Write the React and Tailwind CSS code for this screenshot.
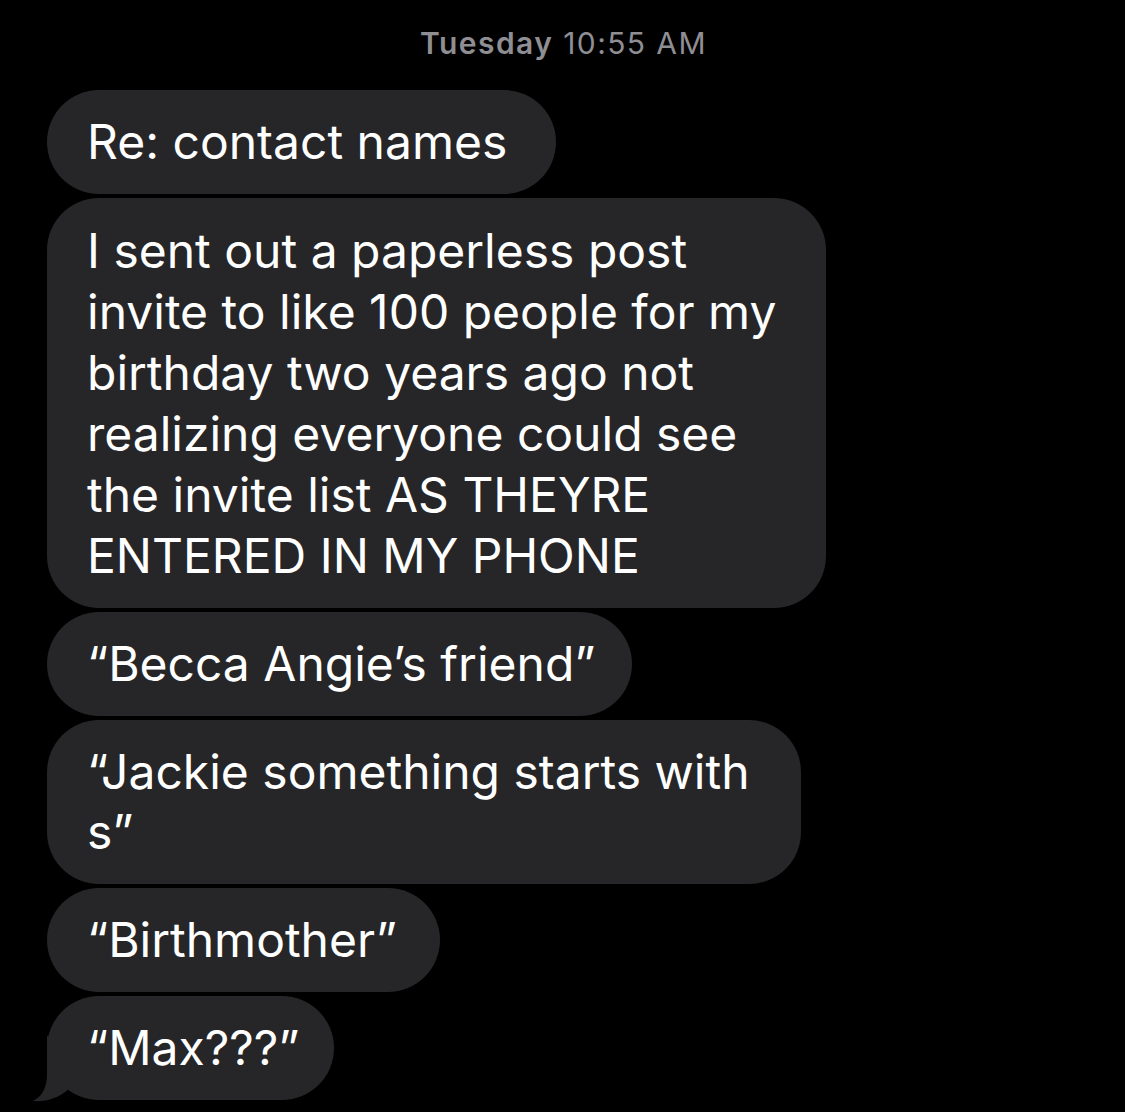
export default function App() {
  const bubble = "relative bg-[#262628] text-white rounded-[52px] px-[40px] py-[22px] leading-[60px] text-[48px] whitespace-nowrap";
  return (
    <div className="w-[1125px] h-[1112px] bg-black overflow-hidden" style={{ fontFamily: "Inter, 'Noto Sans', sans-serif" }}>
      <div className="h-[86px] flex items-center justify-center text-[#8e8e93] text-[30px] tracking-[1.4px] pl-[2px]">
        <span className="font-semibold">Tuesday</span>
        <span className="ml-[10px]">10:55 AM</span>
      </div>
      <div className="flex flex-col gap-[4px] pl-[47px] mt-[4px]">
        <div className={bubble + " w-[509px]"}>Re: contact names</div>
        <div className={bubble + " w-[779px] leading-[61px]"}>
          I sent out a paperless post<br />
          invite to like 100 people for my<br />
          birthday two years ago not<br />
          realizing everyone could see<br />
          the invite list AS THEYRE<br />
          ENTERED IN MY PHONE
        </div>
        <div className={bubble + " w-[585px]"}>“Becca Angie’s friend”</div>
        <div className={bubble + " w-[754px]"}>
          “Jackie something starts with<br />
          s”
        </div>
        <div className={bubble + " w-[393px]"}>“Birthmother”</div>
        <div className={bubble + " w-[287px]"}>
          “Max???”
          <svg className="absolute left-0 top-0 overflow-visible" width="1" height="1">
            <path
              d="M 0 40 L 0 78 C 0 93 -6 101 -14 105 C -1 106 12 102 22 93 L 22 40 Z"
              fill="#262628"
            />
          </svg>
        </div>
      </div>
    </div>
  );
}
